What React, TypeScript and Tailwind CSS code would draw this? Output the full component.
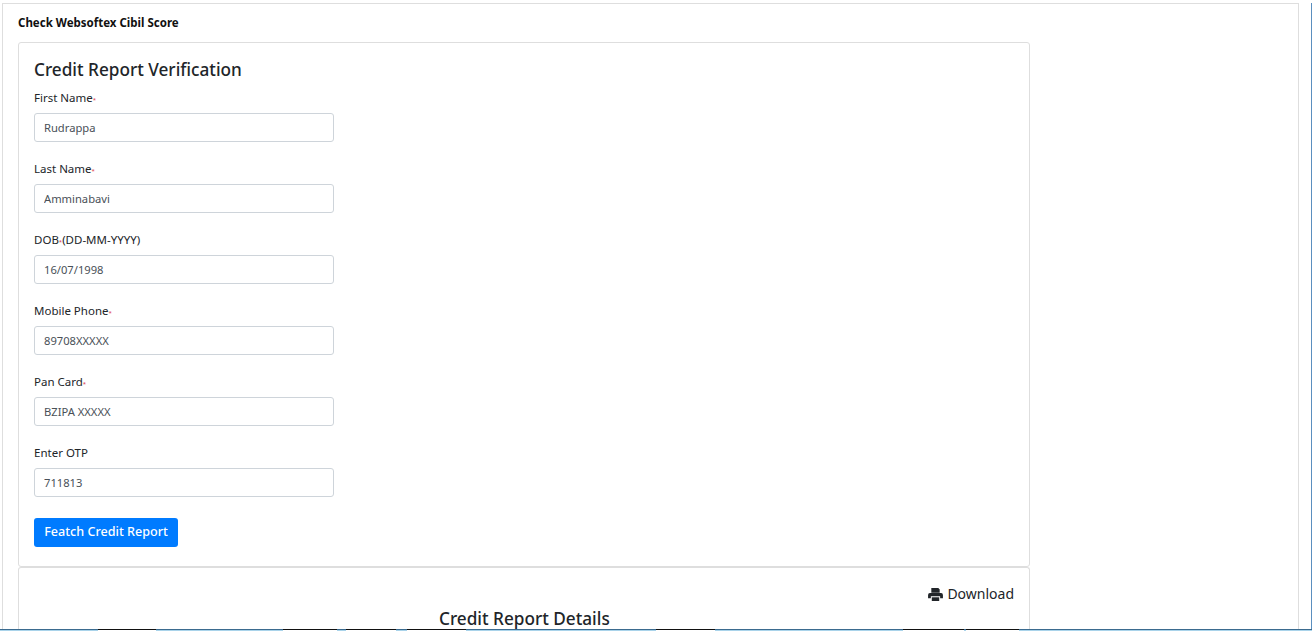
const fields = [
  { label: "First Name", value: "Rudrappa", required: true },
  { label: "Last Name", value: "Amminabavi", required: true },
  { label: "DOB", suffix: "(DD-MM-YYYY)", value: "16/07/1998", required: true },
  { label: "Mobile Phone", value: "89708XXXXX", required: true },
  { label: "Pan Card", value: "BZIPA XXXXX", required: true },
  { label: "Enter OTP", value: "711813", required: false },
];

// what shows of the next block under the fold
const bottomSegments = [
  { width: "w-[98px]", blue: true },
  { width: "w-[58px]", blue: false },
  { width: "w-[127px]", blue: true },
  { width: "w-[54px]", blue: false },
  { width: "w-[9px]", blue: true },
  { width: "w-[50px]", blue: false },
  { width: "w-[11px]", blue: true },
  { width: "w-[59px]", blue: false },
  { width: "w-[190px]", blue: true },
  { width: "w-[59px]", blue: false },
  { width: "w-[188px]", blue: true },
  { width: "w-[61px]", blue: false },
  { width: "w-[2px]", blue: true },
  { width: "w-[53px]", blue: false },
  { width: "w-[6px]", blue: true },
  { width: "flex-1", blue: true },
];

function PrinterIcon() {
  return (
    <svg viewBox="0 0 16 14" className="h-[13px] w-[15px] fill-[#212529]">
      <path d="M3.5 0H11l1.5 1.5V5h-9z" />
      <path d="M2 5.5h12a2 2 0 0 1 2 2V11h-3V9H3v2H0V7.5a2 2 0 0 1 2-2z" />
      <path d="M4 10h8v4H4z" />
    </svg>
  );
}

export default function App() {
  return (
    <div className="flex h-[631px] flex-col overflow-hidden bg-white font-['Noto_Sans',sans-serif] text-[#212529]">
      <div className="flex min-h-0 flex-1 pt-[3px]">
        <main className="min-w-0 flex-1 ml-[2px] mr-[12px] border border-b-0 border-[#dedede] pl-[15px]">
          <h1 className="mt-[11px] text-[11.5px] leading-[16px] font-bold text-[#111111]">
            Check Websoftex Cibil Score
          </h1>
          <section className="mt-[11px] h-[525px] w-[1012px] rounded-[3px] border border-[#dedede] px-[15px] pt-[13px]">
            <h2 className="text-[17.2px] leading-[27px] font-medium">Credit Report Verification</h2>
            {fields.map((field) => (
              <div key={field.label} className="mt-[6px] mb-[18px]">
                <label className="block text-[11.5px] leading-[18px]">
                  {field.label}
                  {field.required && <span className="text-[6px] leading-none text-[#dc3545]">*</span>}
                  {field.suffix}
                </label>
                <input
                  readOnly
                  value={field.value}
                  className="mt-[6px] block h-[29px] w-[300px] rounded-[3px] border border-[#ced4da] px-[9px] text-[11.2px] text-[#495057]"
                />
              </div>
            ))}
            <button className="mt-[3px] h-[29px] w-[144px] rounded-[3px] bg-[#007bff] text-[12.6px] font-medium text-white">
              Featch Credit Report
            </button>
          </section>
          <section className="h-[80px] w-[1012px] rounded-t-[3px] border border-b-0 border-[#dedede] px-[15px]">
            <div className="flex items-center justify-end gap-[4px] pt-[16px] text-[14px] leading-[20px]">
              <PrinterIcon />
              <span>Download</span>
            </div>
            <h3 className="mt-[3px] ml-[405px] text-[17.2px] leading-[24px] font-medium">Credit Report Details</h3>
          </section>
        </main>
        <div className="w-px bg-[#5b8fbf]" />
      </div>
      <div className="flex h-[2px] shrink-0">
        {bottomSegments.map((segment, index) => (
          <div
            key={index}
            className={segment.blue ? `${segment.width} border-t border-[#3b6b8f] bg-[#a9d3ea]` : `${segment.width} border-t border-[#111111] bg-white`}
          />
        ))}
      </div>
    </div>
  );
}
